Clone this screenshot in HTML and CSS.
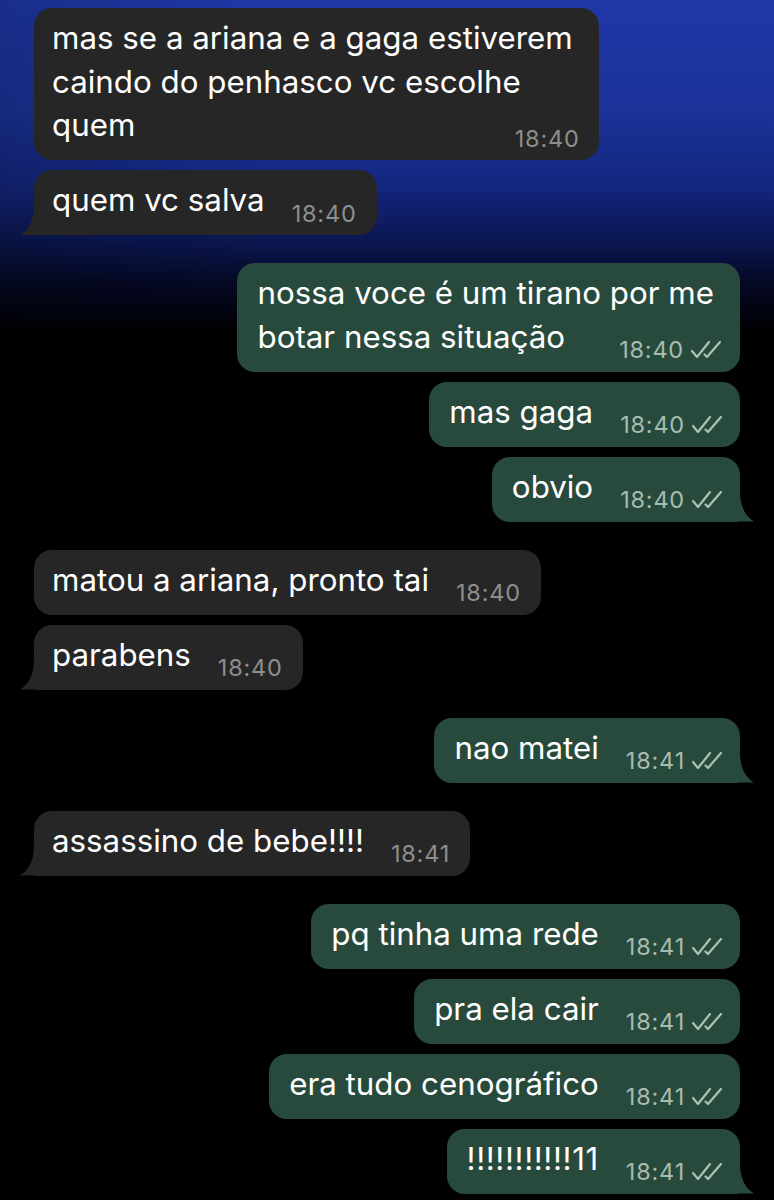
FILE: index.html
```html
<!DOCTYPE html>
<html lang="pt-BR">
<head>
    <meta charset="UTF-8">
    <meta name="viewport" content="width=device-width, initial-scale=1.0">
    <title>Conversa</title>
    <link rel="stylesheet" href="styles.css">
</head>
<body>
    <div class="chat">
        <div class="group in">
            <div class="bubble multi">
                <div class="line">mas se a ariana e a gaga estiverem</div>
                <div class="line">caindo do penhasco vc escolhe</div>
                <div class="row"><span class="text">quem</span><span class="meta"><span class="time">18:40</span></span></div>
            </div>
            <div class="bubble tail">
                <div class="row"><span class="text">quem vc salva</span><span class="meta"><span class="time">18:40</span></span></div>
            </div>
        </div>

        <div class="group out">
            <div class="bubble multi">
                <div class="line">nossa voce é um tirano por me</div>
                <div class="row"><span class="text">botar nessa situação</span><span class="meta"><span class="time">18:40</span><svg class="ticks" viewBox="0 0 30 18"><path d="M1 10 L6 16 L18 1 M13.5 13.5 L16 16 L29 1"/></svg></span></div>
            </div>
            <div class="bubble">
                <div class="row"><span class="text">mas gaga</span><span class="meta"><span class="time">18:40</span><svg class="ticks" viewBox="0 0 30 18"><path d="M1 10 L6 16 L18 1 M13.5 13.5 L16 16 L29 1"/></svg></span></div>
            </div>
            <div class="bubble tail">
                <div class="row"><span class="text">obvio</span><span class="meta"><span class="time">18:40</span><svg class="ticks" viewBox="0 0 30 18"><path d="M1 10 L6 16 L18 1 M13.5 13.5 L16 16 L29 1"/></svg></span></div>
            </div>
        </div>

        <div class="group in">
            <div class="bubble">
                <div class="row"><span class="text">matou a ariana, pronto tai</span><span class="meta"><span class="time">18:40</span></span></div>
            </div>
            <div class="bubble tail">
                <div class="row"><span class="text">parabens</span><span class="meta"><span class="time">18:40</span></span></div>
            </div>
        </div>

        <div class="group out">
            <div class="bubble tail">
                <div class="row"><span class="text">nao matei</span><span class="meta"><span class="time">18:41</span><svg class="ticks" viewBox="0 0 30 18"><path d="M1 10 L6 16 L18 1 M13.5 13.5 L16 16 L29 1"/></svg></span></div>
            </div>
        </div>

        <div class="group in">
            <div class="bubble tail">
                <div class="row"><span class="text">assassino de bebe!!!!</span><span class="meta"><span class="time">18:41</span></span></div>
            </div>
        </div>

        <div class="group out">
            <div class="bubble">
                <div class="row"><span class="text">pq tinha uma rede</span><span class="meta"><span class="time">18:41</span><svg class="ticks" viewBox="0 0 30 18"><path d="M1 10 L6 16 L18 1 M13.5 13.5 L16 16 L29 1"/></svg></span></div>
            </div>
            <div class="bubble">
                <div class="row"><span class="text">pra ela cair</span><span class="meta"><span class="time">18:41</span><svg class="ticks" viewBox="0 0 30 18"><path d="M1 10 L6 16 L18 1 M13.5 13.5 L16 16 L29 1"/></svg></span></div>
            </div>
            <div class="bubble">
                <div class="row"><span class="text">era tudo cenográfico</span><span class="meta"><span class="time">18:41</span><svg class="ticks" viewBox="0 0 30 18"><path d="M1 10 L6 16 L18 1 M13.5 13.5 L16 16 L29 1"/></svg></span></div>
            </div>
            <div class="bubble tail">
                <div class="row"><span class="text bangs">!!!!!!!!!!!11</span><span class="meta"><span class="time">18:41</span><svg class="ticks" viewBox="0 0 30 18"><path d="M1 10 L6 16 L18 1 M13.5 13.5 L16 16 L29 1"/></svg></span></div>
            </div>
        </div>
    </div>
</body>
</html>
```

FILE: styles.css
```css
body {
    margin: 0;
    min-height: 1200px;
    font-family: Inter, "Noto Sans", sans-serif;
    color: #fff;
    background-color: #000;
    background-image:
        linear-gradient(to right, rgba(0, 0, 0, 0.18), rgba(0, 0, 0, 0) 35%),
        linear-gradient(to bottom, #1f38a8 0px, #1b3299 110px, #14267f 185px, #0b1752 240px, #040822 285px, #000 335px);
    background-repeat: no-repeat;
}
.chat {
    padding: 8px 34px 0 34px;
}
.group {
    display: flex;
    flex-direction: column;
    gap: 10px;
    margin-bottom: 28px;
}
.group.in {
    align-items: flex-start;
}
.group.out {
    align-items: flex-end;
}
.bubble {
    position: relative;
    padding: 9px 20px 12.5px 18px;
    border-radius: 18px;
    font-size: 31.3px;
    line-height: 43.5px;
    background-color: #262626;
}
.out .bubble {
    padding-left: 20px;
    padding-right: 18px;
    background-color: #284a3c;
}
.bubble.multi {
    padding-right: 26px;
}
.bubble.multi .meta {
    margin-right: -7px;
}
.row {
    display: flex;
    justify-content: space-between;
    align-items: flex-end;
    gap: 27px;
}
.text.bangs {
    letter-spacing: 0.6px;
}
.meta {
    display: flex;
    align-items: center;
    gap: 7px;
    font-size: 23.5px;
    letter-spacing: 0.8px;
    line-height: 22px;
    margin-bottom: -2px;
    color: #8e8e8e;
}
.out .meta {
    color: #a7bcb1;
}
.ticks {
    width: 30px;
    height: 18px;
    fill: none;
    stroke: #adc1b6;
    stroke-width: 2.2;
    stroke-linecap: round;
    stroke-linejoin: round;
}
/* rabinho da bolha */
.bubble.tail::before {
    content: "";
    position: absolute;
    bottom: 0;
    width: 22px;
    height: 30px;
    background-color: inherit;
}
.in .bubble.tail {
    border-bottom-left-radius: 4px;
}
.in .bubble.tail::before {
    left: -14px;
    clip-path: path("M14 0 C14 14 9 25 0 30 L22 30 L22 0 Z");
}
.out .bubble.tail {
    border-bottom-right-radius: 4px;
}
.out .bubble.tail::before {
    right: -14px;
    clip-path: path("M8 0 C8 14 13 25 22 30 L0 30 L0 0 Z");
}
```
